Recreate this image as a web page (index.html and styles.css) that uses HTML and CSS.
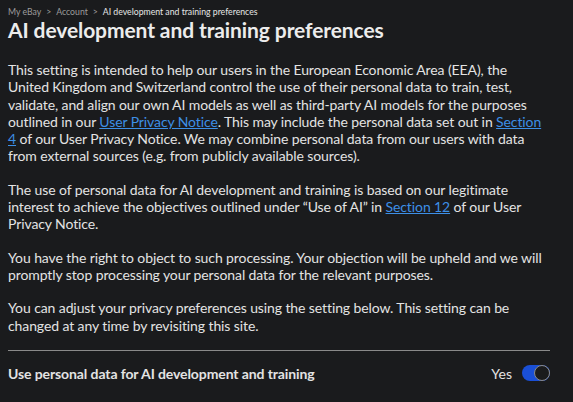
FILE: index.html
```html
<!DOCTYPE html>
<html lang="en">
<head>
<meta charset="utf-8">
<title>AI development and training preferences</title>
<link rel="stylesheet" href="styles.css">
</head>
<body>
<main class="page">
  <nav class="crumbs">
    <a class="crumb" href="#">My eBay</a>
    <span class="sep">&gt;</span>
    <a class="crumb" href="#">Account</a>
    <span class="sep">&gt;</span>
    <span class="crumb current">AI development and training preferences</span>
  </nav>
  <h1 class="title">AI development and training preferences</h1>
  <p class="text">This setting is intended to help our users in the European Economic Area (EEA), the United Kingdom and Switzerland control the use of their personal data to train, test, validate, and align our own AI models as well as third-party AI models for the purposes outlined in our <a class="link" href="#">User Privacy Notice</a>. This may include the personal data set out in <a class="link" href="#">Section 4</a> of our User Privacy Notice. We may combine personal data from our users with data from external sources (e.g. from publicly available sources).</p>
  <p class="text">The use of personal data for AI development and training is based on our legitimate interest to achieve the objectives outlined under “Use of AI” in <a class="link" href="#">Section 12</a> of our User Privacy Notice.</p>
  <p class="text">You have the right to object to such processing. Your objection will be upheld and we will promptly stop processing your personal data for the relevant purposes.</p>
  <p class="text">You can adjust your privacy preferences using the setting below. This setting can be changed at any time by revisiting this site.</p>
  <div class="setting">
    <span class="setting-label">Use personal data for AI development and training</span>
    <label class="switch-wrap">
      <span class="switch-text">Yes</span>
      <span class="switch"><span class="knob"></span></span>
    </label>
  </div>
</main>
</body>
</html>
```
FILE: styles.css
```css
html, body {
  margin: 0;
  padding: 0;
  background: #1a1b1d;
}
body {
  font-family: Lato, "Liberation Sans", sans-serif;
  color: #e3e3e3;
}
.page {
  width: 542px;
  padding: 6px 8px 0 8px;
}
.crumbs {
  display: flex;
  gap: 5px;
  font-size: 8.7px;
  line-height: 12px;
  color: #9c9c9c;
}
.crumb {
  color: #9c9c9c;
  text-decoration: none;
}
.crumb.current {
  color: #e6e6e6;
}
.title {
  margin: -1px 0 0 0;
  font-size: 21px;
  line-height: 26px;
  font-weight: 700;
  letter-spacing: -0.1px;
  color: #ececec;
}
.text {
  margin: 18px 0 0 0;
  font-size: 14px;
  line-height: 17.3px;
  letter-spacing: -0.1px;
}
.text + .text {
  margin-top: 16px;
}
.link {
  color: #3d8fe6;
  text-decoration: underline;
}
.setting {
  margin-top: 16px;
  border-top: 1px solid #8a8a8a;
  display: flex;
  align-items: center;
  justify-content: space-between;
  padding-top: 14px;
}
.setting-label {
  font-size: 14px;
  font-weight: 700;
  line-height: 17px;
  letter-spacing: -0.1px;
}
.switch-wrap {
  display: flex;
  align-items: center;
  gap: 10px;
}
.switch-text {
  font-size: 14px;
  font-weight: 400;
}
.switch {
  position: relative;
  width: 28px;
  height: 16px;
  border-radius: 8px;
  background: #1a4fd6;
  box-sizing: border-box;
}
.knob {
  position: absolute;
  right: 0;
  top: 0;
  width: 16px;
  height: 16px;
  border-radius: 50%;
  background: #1a1b1d;
  border: 1px solid #8a8a8a;
  box-sizing: border-box;
}
```
